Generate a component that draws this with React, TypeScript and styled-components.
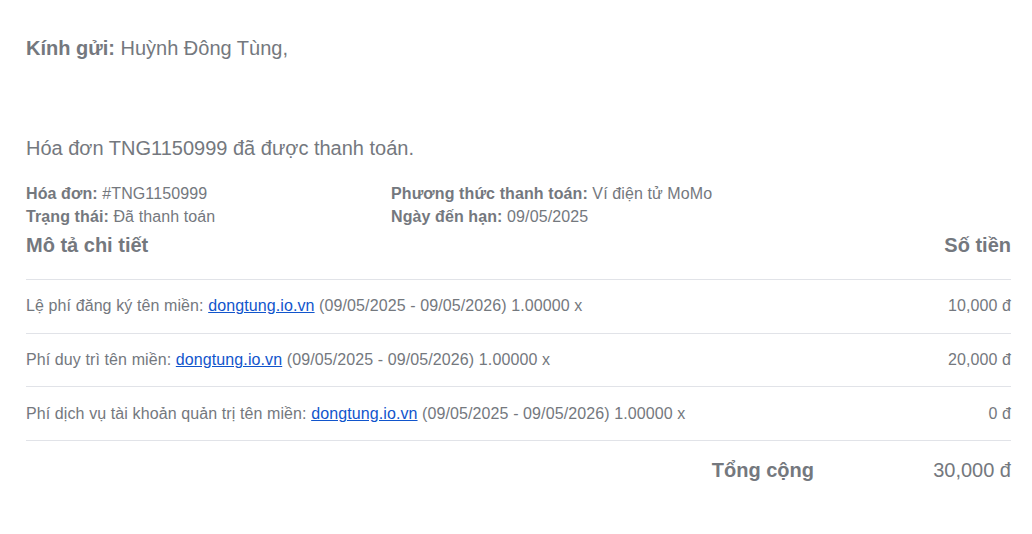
import React from 'react';
import styled, { createGlobalStyle } from 'styled-components';

const GlobalStyle = createGlobalStyle`
  html, body {
    margin: 0;
    padding: 0;
    background: #ffffff;
  }
  body {
    font-family: "Liberation Sans", Arial, sans-serif;
    color: #74787e;
  }
`;

const Page = styled.div`
  padding: 35px 21px 0 26px;
`;

const Greeting = styled.p`
  margin: 0;
  font-size: 20px;
  line-height: 26px;
  strong {
    font-weight: bold;
  }
`;

const Lead = styled.p`
  margin: 74px 0 0;
  font-size: 20px;
  line-height: 26px;
`;

const InfoGrid = styled.div`
  display: grid;
  grid-template-columns: 365px 1fr;
  margin-top: 21px;
  font-size: 16px;
  line-height: 23px;
  letter-spacing: 0.1px;
  strong {
    font-weight: bold;
  }
`;

const Table = styled.div`
  display: flex;
  flex-direction: column;
`;

const HeadRow = styled.div`
  display: flex;
  justify-content: space-between;
  align-items: center;
  height: 34px;
  padding-bottom: 17px;
  border-bottom: 1px solid #e1e3e8;
  font-size: 20px;
  font-weight: bold;
`;

const ItemRow = styled.div`
  display: flex;
  justify-content: space-between;
  align-items: center;
  height: 52.7px;
  border-bottom: 1px solid #e1e3e8;
  font-size: 16px;
  letter-spacing: 0.1px;
`;

const Link = styled.a`
  color: #1155cc;
  text-decoration: underline;
`;

const TotalRow = styled.div`
  display: grid;
  grid-template-columns: 1fr 197px;
  align-items: center;
  height: 58px;
  font-size: 20px;
`;

const TotalLabel = styled.span`
  text-align: right;
  font-weight: bold;
`;

const TotalValue = styled.span`
  text-align: right;
`;

const items = [
  { label: 'Lệ phí đăng ký tên miền:', amount: '10,000 đ' },
  { label: 'Phí duy trì tên miền:', amount: '20,000 đ' },
  { label: 'Phí dịch vụ tài khoản quản trị tên miền:', amount: '0 đ' },
];

export default function App() {
  return (
    <>
      <GlobalStyle />
      <Page>
        <Greeting>
          <strong>Kính gửi:</strong> Huỳnh Đông Tùng,
        </Greeting>
        <Lead>Hóa đơn TNG1150999 đã được thanh toán.</Lead>
        <InfoGrid>
          <div>
            <strong>Hóa đơn:</strong> #TNG1150999
          </div>
          <div>
            <strong>Phương thức thanh toán:</strong> Ví điện tử MoMo
          </div>
          <div>
            <strong>Trạng thái:</strong> Đã thanh toán
          </div>
          <div>
            <strong>Ngày đến hạn:</strong> 09/05/2025
          </div>
        </InfoGrid>
        <Table>
          <HeadRow>
            <span>Mô tả chi tiết</span>
            <span>Số tiền</span>
          </HeadRow>
          {items.map((item) => (
            <ItemRow key={item.label}>
              <span>
                {item.label} <Link href="#">dongtung.io.vn</Link> (09/05/2025 - 09/05/2026) 1.00000 x
              </span>
              <span>{item.amount}</span>
            </ItemRow>
          ))}
          <TotalRow>
            <TotalLabel>Tổng cộng</TotalLabel>
            <TotalValue>30,000 đ</TotalValue>
          </TotalRow>
        </Table>
      </Page>
    </>
  );
}
